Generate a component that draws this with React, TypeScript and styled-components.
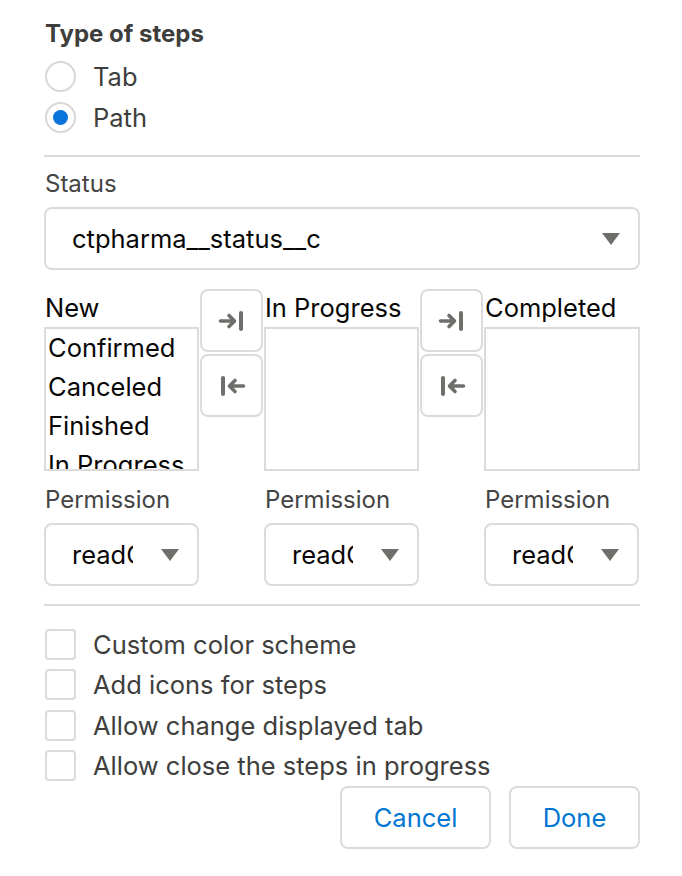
import React from "react";
import styled, { createGlobalStyle } from "styled-components";

const Global = createGlobalStyle`
  html, body { margin: 0; padding: 0; background: #fff; }
  body { font-family: Inter, "Noto Sans", sans-serif; -webkit-font-smoothing: antialiased; }
`;

const Panel = styled.div`
  width: 596px;
  padding: 20px 0 0 44px;
  display: flex;
  flex-direction: column;
`;

const Heading = styled.div`
  font-size: 24px;
  font-weight: 700;
  line-height: 28px;
  color: #3e3e3c;
  padding-left: 1px;
`;

const RadioGroup = styled.div`
  margin-top: 8px;
  margin-bottom: 1px;
  display: flex;
  flex-direction: column;
`;

const OptionRow = styled.label<{ $h?: number }>`
  display: flex;
  align-items: center;
  height: ${(p) => p.$h ?? 41}px;
  gap: 17px;
  padding-left: 1px;
  font-size: 25.5px;
  color: #3e3e3c;
  white-space: nowrap;
`;

const RadioCircle = styled.span<{ $checked?: boolean }>`
  width: 27px;
  height: 27px;
  border: 2px solid #d8d8d8;
  border-radius: 50%;
  display: flex;
  align-items: center;
  justify-content: center;
  flex-shrink: 0;
  &::after {
    content: "";
    display: ${(p) => (p.$checked ? "block" : "none")};
    width: 15px;
    height: 15px;
    border-radius: 50%;
    background: #0b74da;
  }
`;

const Divider = styled.div<{ $top: number }>`
  height: 2px;
  background: #dddbda;
  margin-top: ${(p) => p.$top}px;
`;

const FieldLabel = styled.div<{ $top: number }>`
  font-size: 24px;
  line-height: 28px;
  color: #444;
  margin-top: ${(p) => p.$top}px;
  padding-left: 1px;
`;

const SelectBox = styled.div<{ $w?: number; $pr: number }>`
  box-sizing: border-box;
  width: ${(p) => (p.$w ? `${p.$w}px` : "100%")};
  height: 63px;
  margin-top: 9px;
  border: 2px solid #dddbda;
  border-radius: 8px;
  display: flex;
  align-items: center;
  padding: 0 ${(p) => p.$pr}px 0 26px;
  font-size: 25.5px;
  color: #080707;
  background: #fff;
`;

const SelectText = styled.span<{ $clip?: number }>`
  flex: ${(p) => (p.$clip ? "none" : "1")};
  width: ${(p) => (p.$clip ? `${p.$clip}px` : "auto")};
  overflow: hidden;
  white-space: nowrap;
`;

const Caret = styled.span`
  margin-left: auto;
  width: 0;
  height: 0;
  border-left: 9px solid transparent;
  border-right: 9px solid transparent;
  border-top: 12px solid #706e6b;
`;

const DualList = styled.div`
  margin-top: 19px;
  display: grid;
  grid-template-columns: 155px 65px 155px 65px 156px;
  align-items: start;
`;

const ListColumn = styled.div`
  display: flex;
  flex-direction: column;
`;

const ListTitle = styled.div`
  font-size: 25.5px;
  line-height: 37px;
  margin-bottom: 1px;
  color: #080707;
  padding-left: 1px;
  white-space: nowrap;
`;

const ListBox = styled.div`
  box-sizing: border-box;
  height: 144px;
  border: 2px solid #dddbda;
  overflow: hidden;
  padding-left: 2px;
`;

const ListItem = styled.div`
  font-size: 25.5px;
  line-height: 39px;
  color: #080707;
  white-space: nowrap;
  &:first-child {
    margin-top: -1px;
  }
`;

const MoveButtons = styled.div`
  display: flex;
  flex-direction: column;
  gap: 2px;
  padding-left: 1px;
`;

const MoveButton = styled.button`
  box-sizing: border-box;
  width: 63px;
  height: 63px;
  border: 2px solid #dddbda;
  border-radius: 8px;
  background: #fff;
  display: flex;
  align-items: center;
  justify-content: center;
  padding: 0;
`;

const PermissionRow = styled.div`
  margin-top: 15px;
  display: grid;
  grid-template-columns: 220px 220px 156px;
`;

const PermissionCol = styled.div`
  display: flex;
  flex-direction: column;
`;

const CheckGroup = styled.div`
  margin-top: 18px;
  display: flex;
  flex-direction: column;
`;

const CheckSquare = styled.span`
  box-sizing: border-box;
  width: 31px;
  height: 31px;
  border: 2px solid #dddbda;
  border-radius: 4px;
  flex-shrink: 0;
`;

const Footer = styled.div`
  display: flex;
  justify-content: flex-end;
  gap: 18px;
`;

const FooterButton = styled.button<{ $w: number }>`
  box-sizing: border-box;
  width: ${(p) => p.$w}px;
  height: 63px;
  border: 2px solid #dddbda;
  border-radius: 8px;
  background: #fff;
  color: #0176d3;
  font-family: inherit;
  font-size: 25.5px;
  padding: 0;
`;

const ToRight = () => (
  <svg width="28" height="20" viewBox="0 0 28 20">
    <path d="M2.5 10 H16 M11 4.5 L16.5 10 L11 15.5" fill="none" stroke="#706e6b" strokeWidth="3.6" strokeLinecap="round" strokeLinejoin="round" />
    <path d="M23 2 V18" stroke="#706e6b" strokeWidth="4" strokeLinecap="round" />
  </svg>
);

const ToLeft = () => (
  <svg width="28" height="20" viewBox="0 0 28 20">
    <path d="M25.5 10 H12 M17 4.5 L11.5 10 L17 15.5" fill="none" stroke="#706e6b" strokeWidth="3.6" strokeLinecap="round" strokeLinejoin="round" />
    <path d="M5 2 V18" stroke="#706e6b" strokeWidth="4" strokeLinecap="round" />
  </svg>
);

const Mover = () => (
  <MoveButtons>
    <MoveButton><ToRight /></MoveButton>
    <MoveButton><ToLeft /></MoveButton>
  </MoveButtons>
);

const checks = [
  "Custom color scheme",
  "Add icons for steps",
  "Allow change displayed tab",
  "Allow close the steps in progress",
];

export default function App() {
  return (
    <>
      <Global />
      <Panel>
        <Heading>Type of steps</Heading>
        <RadioGroup>
          <OptionRow><RadioCircle />Tab</OptionRow>
          <OptionRow><RadioCircle $checked />Path</OptionRow>
        </RadioGroup>
        <Divider $top={16} />
        <FieldLabel $top={13}>Status</FieldLabel>
        <SelectBox $pr={18}>
          <SelectText>ctpharma__status__c</SelectText>
          <Caret />
        </SelectBox>
        <DualList>
          <ListColumn>
            <ListTitle>New</ListTitle>
            <ListBox>
              <ListItem>Confirmed</ListItem>
              <ListItem>Canceled</ListItem>
              <ListItem>Finished</ListItem>
              <ListItem>In Progress</ListItem>
            </ListBox>
          </ListColumn>
          <Mover />
          <ListColumn>
            <ListTitle>In Progress</ListTitle>
            <ListBox />
          </ListColumn>
          <Mover />
          <ListColumn>
            <ListTitle>Completed</ListTitle>
            <ListBox />
          </ListColumn>
        </DualList>
        <PermissionRow>
          {[0, 1, 2].map((i) => (
            <PermissionCol key={i}>
              <FieldLabel $top={0}>Permission</FieldLabel>
              <SelectBox $w={155} $pr={18}>
                <SelectText $clip={61}>readOnly</SelectText>
                <Caret />
              </SelectBox>
            </PermissionCol>
          ))}
        </PermissionRow>
        <Divider $top={18} />
        <CheckGroup>
          {checks.map((c) => (
            <OptionRow key={c} $h={40.5}><CheckSquare />{c}</OptionRow>
          ))}
        </CheckGroup>
        <Footer>
          <FooterButton $w={151}>Cancel</FooterButton>
          <FooterButton $w={131}>Done</FooterButton>
        </Footer>
      </Panel>
    </>
  );
}
